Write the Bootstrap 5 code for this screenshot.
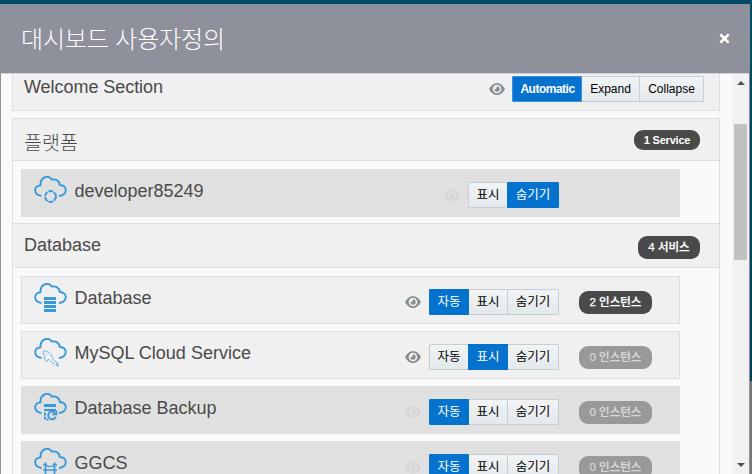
<!DOCTYPE html>
<html lang="ko">
<head>
<meta charset="utf-8">
<meta name="viewport" content="width=device-width, initial-scale=1">
<title>대시보드 사용자정의</title>
<link href="https://cdn.jsdelivr.net/npm/bootstrap@5.3.0/dist/css/bootstrap.min.css" rel="stylesheet">
<style>
  html, body { height: 474px; overflow: hidden; }
  body { background: linear-gradient(#004c66 0, #003f54 381px, #777 381px); font-family: "Liberation Sans", "Noto Sans CJK KR", sans-serif; color: #4a4a4a; }
  .dash-dialog { width: 750px; height: 470px; margin-top: 4px; background: #fafafa; border-left: 1px solid #8e909c; border-right: 1px solid #8e909c; }
  .dash-head { height: 69px; background: #8e909c; padding: 3px 19px 0 20px; }
  .dash-head h1 { font-size: 24px; font-weight: 300; letter-spacing: -.15px; line-height: 36px; }
  .dash-close { width: 11px; height: 11px; margin-bottom: 3px; }
  .dash-body { height: 401px; border-top: 1px solid #d0d4d9; }
  .dash-content { padding: 0 12px 0 11px; }
  .section-head { background: #f0f0f0; border: 1px solid #d9dfe3; padding: 0 19px 0 11px; font-size: 18px; }
  .welcome-head { height: 37px; margin-bottom: 7px; border-top: 0; padding-right: 15px; letter-spacing: -.05px; }
  .welcome-head .eye { margin: 9px 7px 0 0; }
  .welcome-head .seg { margin-top: 2px; }
  .platform-head { height: 43px; }
  .platform-title { font-size: 19.5px; font-weight: 300; line-height: 24px; padding-top: 6px; }
  .database-head { height: 45px; }
  .section-list { border: solid #d9dfe3; border-width: 0 1px; padding: 8px 0 6px 8px; }
  .service-rows { row-gap: 7px; }
  .service { width: 659px; height: 48px; background: #f0f0f0; border: 1px solid #d9dfe3; padding-left: 12px; padding-right: 27px; font-size: 18px; }
  .service.is-off { background: #e0e0e0; border-color: #dedfdf; }
  .cloud { width: 34px; height: 36px; margin: 6px 6.5px 0 0; fill: none; stroke: #3a9ad9; flex: none; }
  .service-name { line-height: 22px; margin-top: 10px; }
  .no-count { margin-right: 93px; }
  .eye { width: 16px; height: 12px; color: #8a8f94; flex: none; }
  .is-off .eye { color: #d4d5d6; }
  .seg .btn { --bs-btn-border-radius: 1px; height: 26px; padding: 0 7px; line-height: 23px; font-size: 12px; letter-spacing: 0; color: #000; border-color: #c4ced7; background: linear-gradient(#f2f4f5, #e3e8eb); white-space: nowrap; }
  .seg .btn.active { background: #0572ce; border-color: #0572ce; color: #fff; }
  .seg-ko .btn { font-size: 12.5px; width: 40px; }
  .seg-ko .btn:last-child { width: 52px; }
  .seg-en .btn { width: 59px; line-height: 24px; }
  .seg-en .btn:last-child { width: 65px; }
  .seg-en .btn.active { width: 70px; padding: 0 6px 0 7px; font-weight: 700; letter-spacing: -.5px; border-color: #3b8de8; }
  .count { height: 23px; border-radius: 9px; background: #4a4a4a; color: #fff; font-size: 11.5px; font-weight: 500; line-height: 23px; text-align: center; flex: none; }
  .count-en { width: 66px; height: 20px; font-size: 11px; font-weight: 700; line-height: 20px; letter-spacing: -.2px; }
  .count-sm { width: 62px; }
  .count-lg { width: 73px; margin-left: 20px; }
  .count-lg, .count-sm { -webkit-text-stroke: .25px; }
  .count.is-zero { background: #999; color: #d8d8d8; }
  .scroll-rail { width: 17px; background: #f1f1f1; padding: 7px 2px 7px; flex: none; }
  .scroll-thumb { width: 13px; height: 136px; background: #c1c1c1; margin-top: 39px; }
  .tri { width: 8px; height: 4px; fill: #505050; display: block; margin-left: 2.5px; }
</style>
</head>
<body>
<svg class="d-none">
  <symbol id="eye" viewBox="0 0 16 12"><path fill="currentColor" fill-rule="evenodd" d="M0 6C2 2 5 0 8 0s6 2 8 6c-2 4-5 6-8 6S2 10 0 6zM8 1.7a4.3 4.3 0 1 0 0 8.6 4.3 4.3 0 0 0 0-8.6zM8 3.3a2.7 2.7 0 1 1-2.7 2.9c.9.5 2.2-.2 2.7-2.9z"/></symbol>
  <symbol id="cloud" viewBox="0 0 34 36"><path stroke-width="1.9" d="M7.500 20C-1 18.600-.6 9.800 6.500 9.200 6.300 0 14.800-1 18 3.700c3.600-1.200 7.600 1.200 7.800 5.300 8.200.3 7.900 9.900-.8 11"/></symbol>
</svg>
<div class="dash-dialog d-flex flex-column">
  <header class="dash-head d-flex align-items-center justify-content-between text-white">
    <h1 class="m-0">대시보드 사용자정의</h1>
    <svg class="dash-close" viewBox="0 0 12 12" stroke="#fff" stroke-width="3"><path d="M1.500 1.500l9 9M10.500 1.500l-9 9"/></svg>
  </header>
  <div class="dash-body d-flex overflow-hidden">
    <main class="dash-content flex-grow-1">
      <div class="section-head welcome-head d-flex align-items-start">
        <span class="me-auto">Welcome Section</span>
        <svg class="eye"><use href="#eye"/></svg>
        <div class="btn-group seg seg-en">
          <button class="btn active">Automatic</button><button class="btn">Expand</button><button class="btn">Collapse</button>
        </div>
      </div>
      <div class="section-head platform-head d-flex align-items-center justify-content-between">
        <span class="platform-title">플랫폼</span><span class="count count-en">1 Service</span>
      </div>
      <div class="section-list">
        <div class="service is-off d-flex">
          <svg class="cloud" viewBox="0 0 34 36"><use href="#cloud"/><circle cx="16.500" cy="20.500" r="5.400" stroke-width="2" stroke-dasharray="4.700 .955"/></svg>
          <span class="service-name me-auto">developer85249</span>
          <div class="no-count d-flex align-items-center align-self-center mt-1">
            <svg class="eye me-2"><use href="#eye"/></svg>
            <div class="btn-group seg seg-ko"><button class="btn">표시</button><button class="btn active">숨기기</button></div>
          </div>
        </div>
      </div>
      <div class="section-head database-head d-flex align-items-center justify-content-between">
        <span>Database</span><span class="count count-sm mt-1">4 서비스</span>
      </div>
      <div class="section-list service-rows d-grid">
        <div class="service d-flex">
          <svg class="cloud" viewBox="0 0 34 36"><use href="#cloud"/><path stroke-width="3" d="M10 15.500h12M10 19.500h12M10 23.500h12M10 27.500h12"/></svg>
          <span class="service-name me-auto">Database</span>
          <div class="d-flex align-items-center align-self-center mt-1">
            <svg class="eye me-2"><use href="#eye"/></svg>
            <div class="btn-group seg seg-ko"><button class="btn active">자동</button><button class="btn">표시</button><button class="btn">숨기기</button></div>
            <span class="count count-lg">2 인스턴스</span>
          </div>
        </div>
        <div class="service d-flex">
          <svg class="cloud" viewBox="0 0 34 36"><use href="#cloud"/><path stroke-width=".7" d="M12.500 24c-1-2-2.500-3-2-6-1-2-2-4-1-5 2-1 5 1 7 3 2 3 2 5 4 7l4 3-2 0 2 2.500-3-2M12.500 24l2-3c2 2 4 5 6 5M12 15l.6.600"/></svg>
          <span class="service-name me-auto">MySQL Cloud Service</span>
          <div class="d-flex align-items-center align-self-center mt-1">
            <svg class="eye me-2"><use href="#eye"/></svg>
            <div class="btn-group seg seg-ko"><button class="btn">자동</button><button class="btn active">표시</button><button class="btn">숨기기</button></div>
            <span class="count count-lg is-zero">0 인스턴스</span>
          </div>
        </div>
        <div class="service is-off d-flex">
          <svg class="cloud" viewBox="0 0 34 36"><use href="#cloud"/><path stroke-width="3" d="M10 12.500h12"/><path stroke-width="2" d="M10 17h12"/><path stroke-width="2" stroke-dasharray="3 1" d="M11 19.500v7.500M13.500 25.500v2"/><path stroke-width="1.900" d="M20.800 19.600a3.900 3.900 0 1 0 1 4M22.300 17.500v3.700h-4"/></svg>
          <span class="service-name me-auto">Database Backup</span>
          <div class="d-flex align-items-center align-self-center mt-1">
            <svg class="eye me-2"><use href="#eye"/></svg>
            <div class="btn-group seg seg-ko"><button class="btn active">자동</button><button class="btn">표시</button><button class="btn">숨기기</button></div>
            <span class="count count-lg is-zero">0 인스턴스</span>
          </div>
        </div>
        <div class="service is-off d-flex">
          <svg class="cloud" viewBox="0 0 34 36"><use href="#cloud"/><path stroke-width="1.700" d="M11.500 14.500v15M20.500 14.500v15M9 22h14"/><path stroke-width="1.200" d="M9 17.500l2.500-2c1 4 8 4 9 0l2.500 2"/></svg>
          <span class="service-name me-auto">GGCS</span>
          <div class="d-flex align-items-center align-self-center mt-1">
            <svg class="eye me-2"><use href="#eye"/></svg>
            <div class="btn-group seg seg-ko"><button class="btn active">자동</button><button class="btn">표시</button><button class="btn">숨기기</button></div>
            <span class="count count-lg is-zero">0 인스턴스</span>
          </div>
        </div>
      </div>
    </main>
    <div class="scroll-rail d-flex flex-column">
      <svg class="tri" viewBox="0 0 8 4"><path d="M0 4l4-4 4 4z"/></svg>
      <div class="scroll-thumb"></div>
      <svg class="tri mt-auto" viewBox="0 0 8 4"><path d="M0 0l4 4 4-4z"/></svg>
    </div>
  </div>
</div>
<script src="https://cdn.jsdelivr.net/npm/bootstrap@5.3.0/dist/js/bootstrap.bundle.min.js"></script>
</body>
</html>
